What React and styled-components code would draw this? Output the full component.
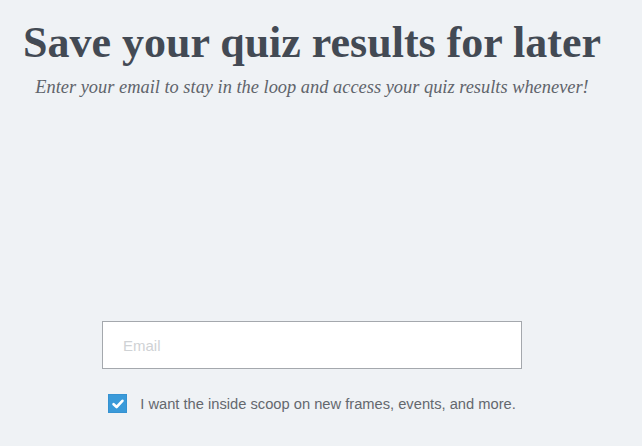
import React, { useState } from "react";
import styled, { createGlobalStyle } from "styled-components";

const GlobalStyle = createGlobalStyle`
  html, body {
    margin: 0;
    padding: 0;
    background: #eff2f5;
  }
`;

const Page = styled.div`
  width: 624px;
  height: 446px;
  display: flex;
  flex-direction: column;
  align-items: center;
  box-sizing: border-box;
  padding-top: 18px;
`;

const Title = styled.h1`
  margin: 0;
  font-family: "Liberation Serif", Georgia, serif;
  font-weight: 700;
  font-size: 44px;
  line-height: 50px;
  white-space: nowrap;
  color: #434a54;
  text-align: center;
`;

const Subtitle = styled.p`
  margin: 8px 0 0;
  font-family: "Liberation Serif", Georgia, serif;
  font-style: italic;
  font-size: 18.4px;
  line-height: 22px;
  white-space: nowrap;
  color: #5f646b;
  text-align: center;
`;

const Form = styled.form`
  margin-top: 223px;
  display: flex;
  flex-direction: column;
  align-items: center;
`;

const EmailInput = styled.input`
  width: 420px;
  height: 48px;
  box-sizing: border-box;
  border: 1px solid #a4a8ad;
  background: #fff;
  padding: 0 20px;
  font-family: "Liberation Sans", Arial, sans-serif;
  font-size: 15px;
  color: #434a54;
  outline: none;
  &::placeholder {
    color: #cfd2d5;
  }
`;

const CheckRow = styled.label`
  margin-top: 25px;
  display: flex;
  align-items: center;
  gap: 13px;
  font-family: "Liberation Sans", Arial, sans-serif;
  font-size: 14.7px;
  color: #64686e;
  cursor: pointer;
`;

const Box = styled.span`
  width: 19px;
  height: 19px;
  background: ${p => (p.checked ? "#3a9ad9" : "#fff")};
  border: 1px solid #3592d1;
  box-sizing: border-box;
  display: flex;
  align-items: center;
  justify-content: center;
`;

const App = () => {
  const [checked, setChecked] = useState(true);
  return (
    <>
      <GlobalStyle />
      <Page>
        <Title>Save your quiz results for later</Title>
        <Subtitle>
          Enter your email to stay in the loop and access your quiz results whenever!
        </Subtitle>
        <Form onSubmit={e => e.preventDefault()}>
          <EmailInput type="email" placeholder="Email" />
          <CheckRow onClick={() => setChecked(!checked)}>
            <Box checked={checked}>
              {checked && (
                <svg width="12" height="10" viewBox="0 0 12 10">
                  <path d="M1.6 5.2 L4.6 8 L10.4 1.8" stroke="#fff" strokeWidth="2.6" fill="none" strokeLinecap="round" strokeLinejoin="round" />
                </svg>
              )}
            </Box>
            I want the inside scoop on new frames, events, and more.
          </CheckRow>
        </Form>
      </Page>
    </>
  );
};

export default App;
